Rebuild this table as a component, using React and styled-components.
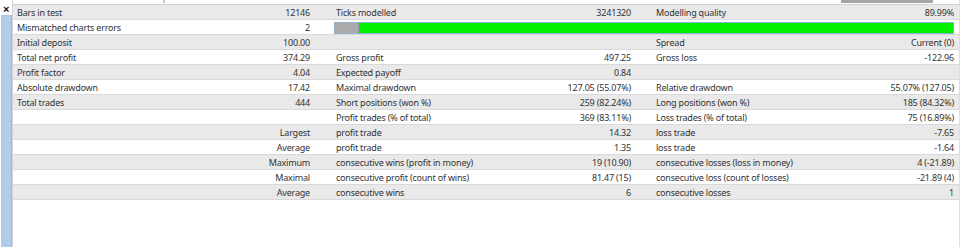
import React from 'react';
import styled, { createGlobalStyle } from 'styled-components';

const Global = createGlobalStyle`
  html, body { margin: 0; padding: 0; background: #fff; }
  body { font-family: "Noto Sans", "Liberation Sans", sans-serif; }
`;

const Frame = styled.div`
  display: flex;
  width: 960px;
  height: 247px;
  overflow: hidden;
  background: #fff;
`;

const Sidebar = styled.div`
  width: 12px;
  display: flex;
  flex-direction: column;
`;

const Close = styled.div`
  height: 15px;
  font: bold 11px "Liberation Sans", sans-serif;
  color: #111;
  line-height: 18px;
  padding-left: 3px;
`;

const BlueBar = styled.div`
  flex: 1;
  margin-left: 1px;
  background: #b1cbea;
  border-right: 1px solid #9db8da;
`;

const Main = styled.div`
  flex: 1;
  display: flex;
  flex-direction: column;
  border-left: 1px solid #d6d6d6;
  border-right: 1px solid #dedede;
`;

const TopStrip = styled.div`
  height: 4px;
  border-bottom: 1px solid #d2d2d2;
  display: flex;
  align-items: flex-start;
`;

const Tick = styled.div`
  width: 2px;
  height: 3px;
  margin-left: 150px;
  background: #c8c8c8;
`;

const Thumb = styled.div`
  width: 92px;
  height: 3px;
  margin-left: 676px;
  background: #a5a5a5;
`;

const Row = styled.div`
  display: grid;
  grid-template-columns: 320px 320px 1fr;
  height: 14px;
  border-bottom: 1px solid #d9d9d9;
  background: ${p => (p.$shade ? '#e9e9e9' : '#ffffff')};
  font-size: 9px;
  letter-spacing: -0.2px;
  color: #333;
  line-height: 15px;
`;

const Pair = styled.div`
  display: flex;
  justify-content: space-between;
  white-space: nowrap;
  padding: ${p => (p.$last ? '0 5px 0 3px' : p.$first ? '0 23px 0 4px' : '0 22px 0 3px')};
`;

const BarCell = styled.div`
  grid-column: 2 / 4;
  padding: 2px 5px 1px 1px;
  display: flex;
`;

const Bar = styled.div`
  flex: 1;
  display: flex;
  border: 1px solid #8fb0c8;
  background: #00f000;
`;

const BarGray = styled.div`
  background: #ababab;
  border-right: 1px solid #8d9aa6;
`;

const rows = [
  [['Bars in test', '12146'], ['Ticks modelled', '3241320'], ['Modelling quality', '89.99%']],
  [['Mismatched charts errors', '2'], 'bar'],
  [['Initial deposit', '100.00'], ['', ''], ['Spread', 'Current (0)']],
  [['Total net profit', '374.29'], ['Gross profit', '497.25'], ['Gross loss', '-122.96']],
  [['Profit factor', '4.04'], ['Expected payoff', '0.84'], ['', '']],
  [['Absolute drawdown', '17.42'], ['Maximal drawdown', '127.05 (55.07%)'], ['Relative drawdown', '55.07% (127.05)']],
  [['Total trades', '444'], ['Short positions (won %)', '259 (82.24%)'], ['Long positions (won %)', '185 (84.32%)']],
  [['', ''], ['Profit trades (% of total)', '369 (83.11%)'], ['Loss trades (% of total)', '75 (16.89%)']],
  [['', 'Largest'], ['profit trade', '14.32'], ['loss trade', '-7.65']],
  [['', 'Average'], ['profit trade', '1.35'], ['loss trade', '-1.64']],
  [['', 'Maximum'], ['consecutive wins (profit in money)', '19 (10.90)'], ['consecutive losses (loss in money)', '4 (-21.89)']],
  [['', 'Maximal'], ['consecutive profit (count of wins)', '81.47 (15)'], ['consecutive loss (count of losses)', '-21.89 (4)']],
  [['', 'Average'], ['consecutive wins', '6'], ['consecutive losses', '1']],
];

const quality = 0.0365;

export default function App() {
  return (
    <>
      <Global />
      <Frame>
        <Sidebar>
          <Close>×</Close>
          <BlueBar />
        </Sidebar>
        <Main>
          <TopStrip>
            <Tick />
            <Thumb />
          </TopStrip>
          {rows.map((r, i) => (
            <Row key={i} $shade={i % 2 === 0}>
              {r.map((c, j) =>
                c === 'bar' ? (
                  <BarCell key={j}>
                    <Bar>
                      <BarGray style={{ width: `${quality * 100}%` }} />
                    </Bar>
                  </BarCell>
                ) : (
                  <Pair key={j} $first={j === 0} $last={j === 2}>
                    <span>{c[0]}</span>
                    <span>{c[1]}</span>
                  </Pair>
                )
              )}
            </Row>
          ))}
        </Main>
      </Frame>
    </>
  );
}
